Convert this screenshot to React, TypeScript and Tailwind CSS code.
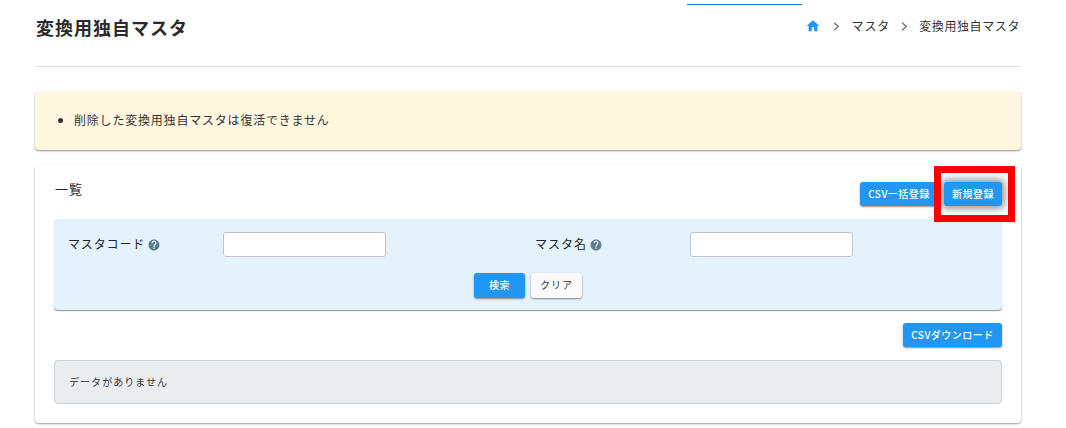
const font = { fontFamily: '"Noto Sans CJK JP", "Noto Sans", sans-serif' };

function HelpIcon() {
  return (
    <svg className="ml-[3px] mt-[3px] h-[12px] w-[12px] shrink-0" viewBox="0 0 24 24" aria-hidden>
      <path
        fill="#607d8b"
        d="M12 1C5.9 1 1 5.9 1 12s4.9 11 11 11 11-4.9 11-11S18.1 1 12 1zm1.2 18.4h-2.5v-2.5h2.5v2.5zm2.5-8.3l-1.1 1.1c-.9.9-1.4 1.6-1.4 3.2h-2.5v-.6c0-1.3.5-2.5 1.4-3.4l1.5-1.6c.5-.4.7-1 .7-1.7 0-1.3-1.1-2.4-2.4-2.4S9.5 6.7 9.5 8H7.1c0-2.7 2.2-4.9 4.9-4.9s4.9 2.2 4.9 4.9c0 1.2-.5 2.2-1.2 3.1z"
      />
    </svg>
  );
}

function Chevron() {
  return (
    <svg className="h-[9px] w-[7px]" viewBox="0 0 7 9" fill="none" aria-hidden>
      <path d="M1.2 0.8 5.2 4.5 1.2 8.2" stroke="#757575" strokeWidth="1.4" />
    </svg>
  );
}

function BlueButton({ label, width }: { label: string; width: string }) {
  return (
    <button
      className={`flex h-[24px] items-center justify-center rounded-[3px] bg-[#2196f3] pb-[2px] text-[10px] font-medium tracking-[0.5px] text-white shadow-[0_1px_2px_rgba(0,0,0,0.45)] ${width}`}
    >
      {label}
    </button>
  );
}

export default function App() {
  return (
    <div className="relative h-[428px] w-[1066px] overflow-hidden bg-white pl-[35px] pr-[45px] text-[#212529]" style={font}>
      {/* 上部タブの下線 */}
      <div className="absolute left-[687px] top-[4px] h-[1px] w-[115px] bg-[#1976d2]" />

      <header className="flex h-[67px] items-start justify-between border-b border-[#e0e0e0] pt-[14px]">
        <h1 className="ml-[1px] text-[18px] font-bold leading-[26px] tracking-[1px] text-[#2b2b2b]">変換用独自マスタ</h1>
        <nav className="flex items-center pt-[3px] text-[12px] leading-[18px] tracking-[0.6px] text-[#333]">
          <svg className="h-[14px] w-[14px]" viewBox="0 0 24 24" aria-hidden>
            <path fill="#2196f3" d="M10 21v-7h4v7h5.5v-9H23L12 2 1 12h3.5v9z" />
          </svg>
          <span className="ml-[13px]"><Chevron /></span>
          <span className="ml-[11px] tracking-[0.9px]">マスタ</span>
          <span className="ml-[11px]"><Chevron /></span>
          <span className="ml-[11px] mr-[1px]">変換用独自マスタ</span>
        </nav>
      </header>

      <div className="mt-[25px] flex h-[58px] items-center rounded-[4px] bg-[#fff7df] pb-[2px] pl-[25px] shadow-[0_1px_2px_rgba(0,0,0,0.45)]">
        <ul className="list-disc pl-[14px] text-[12px] leading-[18px] tracking-[0.8px] text-[#333]">
          <li>削除した変換用独自マスタは復活できません</li>
        </ul>
      </div>

      <section className="mt-[15px] h-[258px] rounded-[4px] bg-white px-[19px] pt-[17px] shadow-[0_1px_2px_rgba(0,0,0,0.4)]">
        <div className="flex h-[37px] items-start justify-between">
          <h2 className="-mt-[2px] ml-[1px] text-[13px] leading-[18px] tracking-[1px] text-[#212529]">一覧</h2>
          <div className="flex">
            <BlueButton label="CSV一括登録" width="w-[78px]" />
            <div className="ml-[6px]">
              <button className="flex h-[24px] w-[58px] items-center justify-center rounded-[3px] bg-[#2196f3] pb-[2px] text-[10px] font-medium tracking-[0.5px] text-white shadow-[0_0_7px_3px_rgba(0,0,0,0.4)]">
                新規登録
              </button>
            </div>
          </div>
        </div>

        <div className="h-[91px] rounded-[4px] bg-[#e3f2fd] pt-[13px] shadow-[0_1px_1px_rgba(0,0,0,0.45)]">
          <div className="flex h-[25px]">
            <div className="flex w-[467px] items-center pl-[14px]">
              <label className="-mt-[2px] flex w-[155px] items-center text-[12px] tracking-[0.85px] text-[#212529]">
                マスタコード
                <HelpIcon />
              </label>
              <input className="h-[25px] w-[163px] rounded-[3px] border border-[#c4c4c4] bg-white" />
            </div>
            <div className="flex items-center pl-[14px]">
              <label className="-mt-[2px] flex w-[155px] items-center text-[12px] tracking-[1px] text-[#212529]">
                マスタ名
                <HelpIcon />
              </label>
              <input className="h-[25px] w-[163px] rounded-[3px] border border-[#c4c4c4] bg-white" />
            </div>
          </div>
          <div className="mt-[16px] flex justify-center gap-[6px]">
            <button className="h-[25px] w-[51px] rounded-[3px] bg-[#2196f3] pb-[2px] text-[10px] font-medium tracking-[0.5px] text-white shadow-[0_1px_2px_rgba(0,0,0,0.45)]">
              検索
            </button>
            <button className="h-[25px] w-[51px] rounded-[3px] bg-[#fafafa] pb-[2px] text-[10px] font-normal tracking-[1px] text-[#333] shadow-[0_1px_2px_rgba(0,0,0,0.45)]">
              クリア
            </button>
          </div>
        </div>

        <div className="mt-[13px] flex justify-end">
          <BlueButton label="CSVダウンロード" width="w-[99px]" />
        </div>

        <div className="mt-[13px] flex h-[44px] items-center rounded-[4px] border border-[#cfd2d4] bg-[#eaedf0] pb-[2px] pl-[14px] text-[10px] tracking-[1.05px] text-[#333]">
          データがありません
        </div>
      </section>

      {/* 赤枠の注釈 */}
      <div className="pointer-events-none absolute left-[934px] top-[166px] h-[56px] w-[81px] border-[7px] border-[#ff0000]" />
    </div>
  );
}
